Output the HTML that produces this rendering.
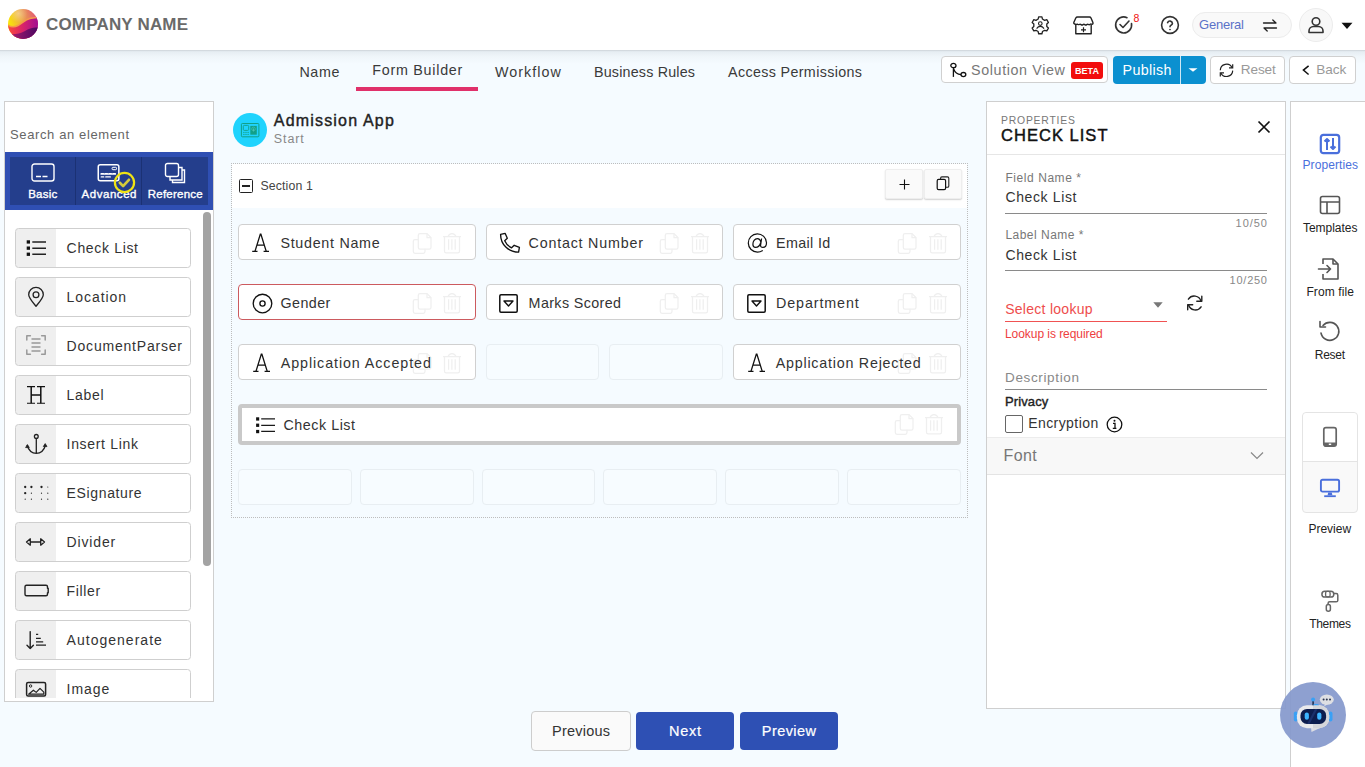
<!DOCTYPE html>
<html><head><meta charset="utf-8"><style>
html,body{margin:0;padding:0}
body{width:1365px;height:767px;overflow:hidden;position:relative;background:#f5fbff;font-family:"Liberation Sans",sans-serif}
.t{position:absolute;white-space:nowrap;line-height:1}
.r{position:absolute}
</style></head><body>
<div class="r" style="left:0px;top:50px;width:1365px;height:14px;background:linear-gradient(rgba(40,60,80,0.09),rgba(40,60,80,0.03) 45%,rgba(40,60,80,0))"></div>
<div class="r" style="left:0px;top:0px;width:1365px;height:50px;background:#fff;box-shadow:0 1px 1px rgba(0,0,0,0.07);z-index:2"></div>
<svg class="r" style="left:7.8px;top:9.3px;z-index:3" width="30" height="30" viewBox="0 0 30 30" fill="none"><defs>
<linearGradient id="lg1" x1="0" y1="0.3" x2="1" y2="0">
<stop offset="0" stop-color="#f9e30c"/><stop offset="0.45" stop-color="#eba24a"/><stop offset="1" stop-color="#e04683"/></linearGradient>
<linearGradient id="lg2" x1="0" y1="0" x2="1" y2="0">
<stop offset="0" stop-color="#fb4a3a"/><stop offset="0.5" stop-color="#d8236a"/><stop offset="1" stop-color="#a20e92"/></linearGradient>
<linearGradient id="lg3" x1="0" y1="0" x2="1" y2="0">
<stop offset="0" stop-color="#b01e6e"/><stop offset="1" stop-color="#4a0862"/></linearGradient>
<radialGradient id="hl" cx="0.35" cy="0.15" r="0.3"><stop offset="0" stop-color="#fff" stop-opacity="0.35"/><stop offset="1" stop-color="#fff" stop-opacity="0"/></radialGradient>
<clipPath id="cc"><circle cx="15" cy="15" r="15"/></clipPath></defs>
<g clip-path="url(#cc)">
<rect width="30" height="30" fill="url(#lg1)"/>
<rect width="30" height="30" fill="url(#hl)"/>
<path d="M0 16 C3 18 6 18.5 10 16.5 C14 14.5 17 10.5 22 9.5 C26 8.7 28 8.5 30 8.5 L30 30 L0 30Z" fill="url(#lg2)"/>
<path d="M0 16 C3 18 6 18.5 10 16.5 C14 14.5 17 10.5 22 9.5 C26 8.7 28 8.5 30 8.5" stroke="#f59a4a" stroke-width="1.5"/>
<path d="M0 25 C6 25.5 12 25 17 22 C21 19.5 25 18 30 18.5 L30 30 L0 30Z" fill="url(#lg3)"/>
</g></svg>
<div class="t" style="left:46.00px;top:16px;font-size:17px;font-weight:700;color:#6a6a6a;letter-spacing:0.173px;z-index:3">COMPANY NAME</div>
<svg class="r" style="left:1031px;top:15.5px;z-index:3" width="19" height="19" viewBox="0 0 19 19" fill="none"><path stroke="#222" stroke-width="1.3" stroke-linejoin="round" d="M7.15 3.06 L7.66 0.86 L10.94 0.86 L11.45 3.06 L13.63 4.32 L15.79 3.66 L17.43 6.50 L15.78 8.04 L15.78 10.56 L17.43 12.10 L15.79 14.94 L13.63 14.28 L11.45 15.54 L10.94 17.74 L7.66 17.74 L7.15 15.54 L4.97 14.28 L2.81 14.94 L1.17 12.10 L2.82 10.56 L2.82 8.04 L1.17 6.50 L2.81 3.66 L4.97 4.32Z"/>
<circle cx="9.3" cy="7.6" r="1.8" stroke="#222" stroke-width="1.1"/><path stroke="#222" stroke-width="1.1" d="M5.6 12.6c1-1.5 2.2-2.2 3.7-2.2s2.7.7 3.7 2.2"/></svg>
<svg class="r" style="left:1072.5px;top:15.5px;z-index:3" width="21" height="19" viewBox="0 0 21 19" fill="none"><path stroke="#222" stroke-width="1.4" stroke-linejoin="round" d="M4.5 1h12c.8 0 1.2.4 1.5 1l1.8 4.3c.3.8.2 1.6-.4 1.9-.7.4-1.4-.3-1.9-.1-.5.2-1.2 1-2 .4-.6-.4-1.2-.3-1.8.1-.6.5-1.3.5-1.9 0-.6-.4-1.2-.4-1.8 0-.6.5-1.3.5-1.9 0-.6-.4-1.2-.5-1.8-.1-.7.5-1.4-.1-2-.3-.7-.1-1.4.5-1.9.1C.7 7.9.6 7.1.9 6.3L2.8 2c.3-.6.8-1 1.7-1z"/>
<path stroke="#222" stroke-width="1.4" stroke-linejoin="round" d="M2.8 8.8V17.8h15.4V8.8"/><path stroke="#222" stroke-width="1.2" d="M10.5 11.3v5M8 13.8h5"/></svg>
<svg class="r" style="left:1114px;top:15px;z-index:3" width="20" height="20" viewBox="0 0 20 20" fill="none"><path stroke="#333" stroke-width="1.6" stroke-linecap="round" stroke-linejoin="round" d="M17.5 8.5A8 8 0 1 1 13 2.7"/><path stroke="#333" stroke-width="1.6" stroke-linecap="round" stroke-linejoin="round" d="M6 9.5l3 3 6-6.5"/></svg>
<div class="t" style="left:1133.50px;top:13px;font-size:10.5px;font-weight:400;color:#f01010;letter-spacing:0.000px;z-index:3">8</div>
<svg class="r" style="left:1160px;top:15px;z-index:3" width="20" height="20" viewBox="0 0 20 20" fill="none"><circle cx="10" cy="10" r="8.4" stroke="#333" stroke-width="1.6" stroke-linecap="round" stroke-linejoin="round"/><path stroke="#333" stroke-width="1.6" stroke-linecap="round" stroke-linejoin="round" d="M7.6 7.6a2.5 2.5 0 0 1 4.8.8c0 1.6-2.4 2-2.4 3.4"/><circle cx="10" cy="14.6" r="0.5" fill="#333" stroke="#333" stroke-width="0.8"/></svg>
<div class="r" style="left:1192px;top:12px;width:100px;height:26px;background:#f9f9f9;border:1px solid #ececec;box-sizing:border-box;border-radius:13px;z-index:3"></div>
<div class="t" style="left:1199.00px;top:18px;font-size:13px;font-weight:400;color:#5b72c8;letter-spacing:-0.208px;z-index:3">General</div>
<svg class="r" style="left:1261px;top:17px;z-index:3" width="18" height="16" viewBox="0 0 18 16" fill="none"><path d="M2.5 6h12.5l-3.2-3M15.5 11H3l3.2 3" stroke="#222" stroke-width="1.3" stroke-linecap="round" stroke-linejoin="round"/></svg>
<div class="r" style="left:1299px;top:8px;width:34px;height:34px;background:#f8f8f8;border:1px solid #ececec;box-sizing:border-box;border-radius:50%;z-index:3"></div>
<svg class="r" style="left:1306px;top:15px;z-index:3" width="20" height="20" viewBox="0 0 20 20" fill="none"><circle cx="10" cy="6.5" r="3.8" stroke="#333" stroke-width="1.6" stroke-linecap="round" stroke-linejoin="round"/><path stroke="#333" stroke-width="1.6" stroke-linecap="round" stroke-linejoin="round" d="M3 17.5v-1.5c0-2.5 2-4.5 4.5-4.5h5c2.5 0 4.5 2 4.5 4.5v1.5z"/></svg>
<svg class="r" style="left:1341px;top:22px;z-index:3" width="12" height="8" viewBox="0 0 12 8" fill="none"><path d="M0.5 0.8h11L6 7z" fill="#111"/></svg>
<div class="t" style="left:299.40px;top:65px;font-size:14.3px;font-weight:400;color:#3a3a3a;letter-spacing:0.617px;">Name</div>
<div class="t" style="left:372.30px;top:63px;font-size:14.3px;font-weight:400;color:#3a3a3a;letter-spacing:0.741px;">Form Builder</div>
<div class="t" style="left:495.00px;top:65px;font-size:14.3px;font-weight:400;color:#3a3a3a;letter-spacing:1.057px;">Workflow</div>
<div class="t" style="left:594.00px;top:65px;font-size:14.3px;font-weight:400;color:#3a3a3a;letter-spacing:0.188px;">Business Rules</div>
<div class="t" style="left:728.00px;top:65px;font-size:14.3px;font-weight:400;color:#3a3a3a;letter-spacing:0.356px;">Access Permissions</div>
<div class="r" style="left:356px;top:87px;width:122px;height:4px;background:#e0306a"></div>
<div class="r" style="left:941px;top:56px;width:167px;height:27px;background:#fff;border:1px solid #d0d0d0;box-sizing:border-box;border-radius:4px"></div>
<svg class="r" style="left:949px;top:62px;" width="19" height="17" viewBox="0 0 19 17" fill="none"><ellipse cx="4.4" cy="3.5" rx="2.6" ry="2.2" stroke="#111" stroke-width="1.3"/><ellipse cx="14.4" cy="12.6" rx="2.4" ry="2.1" stroke="#111" stroke-width="1.3"/><path d="M4.4 5.7v9.2" stroke="#111" stroke-width="1.3"/><path d="M4.6 6.8C5.8 10.3 7.8 12.4 12 12.6" stroke="#111" stroke-width="1.2"/></svg>
<div class="t" style="left:971.00px;top:63px;font-size:14.3px;font-weight:400;color:#777;letter-spacing:0.629px;">Solution View</div>
<div class="r" style="left:1071px;top:62px;width:32px;height:17px;background:#f20d0d;border-radius:3px"></div>
<div class="t" style="left:1075.00px;top:67px;font-size:9px;font-weight:700;color:#fff;letter-spacing:0.050px;">BETA</div>
<div class="r" style="left:1113px;top:56px;width:93px;height:28px;background:#0b90d0;border-radius:4px"></div>
<div class="r" style="left:1180px;top:56px;width:1px;height:28px;background:#cfe8f5"></div>
<div class="t" style="left:1122.50px;top:63px;font-size:14.3px;font-weight:400;color:#fff;letter-spacing:0.350px;">Publish</div>
<svg class="r" style="left:1188px;top:68px;" width="10" height="4" viewBox="0 0 10 4" fill="none"><path d="M0.5 0.3h9L5 3.8z" fill="#fff"/></svg>
<div class="r" style="left:1210px;top:56px;width:75px;height:28px;background:#fff;border:1px solid #d0d0d0;box-sizing:border-box;border-radius:4px"></div>
<svg class="r" style="left:1218px;top:62px;" width="17" height="17" viewBox="0 0 17 17" fill="none"><path d="M2.3 8.3A6.2 6.2 0 0 1 14.1 5.7M14.7 8.6A6.2 6.2 0 0 1 2.9 10.9" stroke="#222" stroke-width="1.2"/><path d="M14.7 2.2v3.7h-3.7M2.3 14.6v-3.7h3.7" stroke="#222" stroke-width="1.2"/></svg>
<div class="t" style="left:1240.80px;top:63px;font-size:13.6px;font-weight:400;color:#999;letter-spacing:-0.137px;">Reset</div>
<div class="r" style="left:1289px;top:56px;width:67px;height:28px;background:#fff;border:1px solid #d0d0d0;box-sizing:border-box;border-radius:4px"></div>
<svg class="r" style="left:1300px;top:63px;" width="12" height="14" viewBox="0 0 12 14" fill="none"><path d="M8.6 2.8L3.4 7.1l5.2 4.4" stroke="#111" stroke-width="1.5"/></svg>
<div class="t" style="left:1316.20px;top:63px;font-size:13.6px;font-weight:400;color:#999;letter-spacing:-0.067px;">Back</div>
<div class="r" style="left:4px;top:101px;width:210px;height:601px;background:#fff;border:1px solid #cfcfcf;box-sizing:border-box"></div>
<div class="t" style="left:10.00px;top:128px;font-size:13px;font-weight:400;color:#666;letter-spacing:0.619px;">Search an element</div>
<div class="r" style="left:5px;top:152px;width:208px;height:57.5px;background:#2f4fb3"></div>
<div class="r" style="left:10px;top:157px;width:198px;height:47.5px;background:#243e8c"></div>
<div class="r" style="left:75px;top:157px;width:1px;height:47.5px;background:#1b3174"></div>
<div class="r" style="left:141px;top:157px;width:1px;height:47.5px;background:#1b3174"></div>
<svg class="r" style="left:31px;top:163px;" width="24" height="19" viewBox="0 0 24 19" fill="none"><rect x="1" y="1" width="22" height="17" rx="2.5" stroke="#fff" stroke-width="1.4"/><path d="M5 13.5h5M11.5 13.5h5" stroke="#fff" stroke-width="1.4"/></svg>
<div class="t" style="left:28.20px;top:189px;font-size:11.5px;font-weight:400;color:#fff;letter-spacing:0.225px;-webkit-text-stroke:0.35px #fff;">Basic</div>
<svg class="r" style="left:97px;top:163px;" width="24" height="20" viewBox="0 0 24 20" fill="none"><rect x="1.25" y="1.85" width="20.6" height="15.9" rx="2" stroke="#fff" stroke-width="1.5"/><path d="M4.3 10.9h2.2M8.2 10.9h2.2M12.1 10.9h2.2M16 10.9h2.2" stroke="#fff" stroke-width="1.9" stroke-linecap="round"/><path d="M4.3 13.9h2.4M8.8 13.9h4.5" stroke="#fff" stroke-width="1.4" stroke-linecap="round"/><rect x="15.1" y="4.3" width="4.4" height="2.4" rx="0.8" stroke="#fff" stroke-width="1"/></svg>
<div class="t" style="left:81.50px;top:189px;font-size:11.5px;font-weight:400;color:#fff;letter-spacing:0.550px;-webkit-text-stroke:0.35px #fff;">Advanced</div>
<svg class="r" style="left:113px;top:171px;" width="23" height="23" viewBox="0 0 23 23" fill="none"><circle cx="11.5" cy="11.5" r="9.6" stroke="#efe314" stroke-width="2.2"/><path d="M6.8 11.8l3.3 3.3 5.8-6.3" stroke="#d4cb3c" stroke-width="2.7" stroke-linecap="round" stroke-linejoin="round"/></svg>
<svg class="r" style="left:164px;top:162px;" width="23" height="22" viewBox="0 0 23 22" fill="none"><rect x="1.5" y="1.5" width="13" height="13" rx="2" stroke="#fff" stroke-width="1.4"/><path d="M15 5.5h3v12.5H6v-3M18 8h2.5v12.5H8.5v-2.5" stroke="#fff" stroke-width="1.4"/></svg>
<div class="t" style="left:147.70px;top:189px;font-size:11.5px;font-weight:400;color:#fff;letter-spacing:0.244px;-webkit-text-stroke:0.35px #fff;">Reference</div>
<div class="r" style="left:203px;top:212px;width:8px;height:354px;background:#a3a3a3;border-radius:4px"></div>
<div class="r" style="left:15px;top:228px;width:176px;height:40px;border:1px solid #cfcfcf;box-sizing:border-box;border-radius:3.5px;background:linear-gradient(90deg,#efefef 0,#efefef 40px,#fff 40px);z-index:1"></div>
<svg class="r" style="left:15px;top:228px;z-index:1" width="41" height="40" viewBox="0 0 41 40" fill="none"><rect x="11.7" y="12.3" width="3.3" height="3.3" fill="#111"/><rect x="11.7" y="18.5" width="3.3" height="3.3" fill="#111"/><rect x="11.7" y="24.6" width="3.3" height="3.3" fill="#111"/><path d="M17.3 14h13.7M17.3 20.2h13.7M17.3 26.3h13.7" stroke="#222" stroke-width="1.4"/></svg>
<div class="t" style="left:66.60px;top:241px;font-size:14px;font-weight:400;color:#333;letter-spacing:0.672px;z-index:1">Check List</div>
<div class="r" style="left:15px;top:277px;width:176px;height:40px;border:1px solid #cfcfcf;box-sizing:border-box;border-radius:3.5px;background:linear-gradient(90deg,#efefef 0,#efefef 40px,#fff 40px);z-index:1"></div>
<svg class="r" style="left:15px;top:277px;z-index:1" width="41" height="40" viewBox="0 0 41 40" fill="none"><path d="M21 29.3c-3.5-4.3-7.3-8.6-7.3-11.6a7.3 7.3 0 0 1 14.6 0c0 3-3.8 7.3-7.3 11.6z" stroke="#222" stroke-width="1.3" stroke-linecap="round" stroke-linejoin="round"/><circle cx="21" cy="17.8" r="2.9" stroke="#222" stroke-width="1.3" stroke-linecap="round" stroke-linejoin="round"/></svg>
<div class="t" style="left:66.60px;top:290px;font-size:14px;font-weight:400;color:#333;letter-spacing:0.921px;z-index:1">Location</div>
<div class="r" style="left:15px;top:326px;width:176px;height:40px;border:1px solid #cfcfcf;box-sizing:border-box;border-radius:3.5px;background:linear-gradient(90deg,#efefef 0,#efefef 40px,#fff 40px);z-index:1"></div>
<svg class="r" style="left:15px;top:326px;z-index:1" width="41" height="40" viewBox="0 0 41 40" fill="none"><path d="M11.8 14V9.8h3.6M26.6 9.8h3.6V14M11.8 24v4.2h3.6M30.2 24v4.2h-3.6" stroke="#999" stroke-width="1.5" stroke-linecap="round" stroke-linejoin="round"/><path d="M16.5 13h9M16.5 17h9M16.5 21h9M16.5 25h9" stroke="#999" stroke-width="1.6"/></svg>
<div class="t" style="left:66.60px;top:339px;font-size:14px;font-weight:400;color:#333;letter-spacing:0.796px;z-index:1">DocumentParser</div>
<div class="r" style="left:15px;top:375px;width:176px;height:40px;border:1px solid #cfcfcf;box-sizing:border-box;border-radius:3.5px;background:linear-gradient(90deg,#efefef 0,#efefef 40px,#fff 40px);z-index:1"></div>
<svg class="r" style="left:15px;top:375px;z-index:1" width="41" height="40" viewBox="0 0 41 40" fill="none"><path d="M16.2 11.6v16.6M25.8 11.6v16.6M16.2 20h9.6" stroke="#111" stroke-width="1.5"/><path d="M12 11.6h8M22 11.6h8M12 28.2h8M22 28.2h8" stroke="#111" stroke-width="1.1"/></svg>
<div class="t" style="left:66.60px;top:388px;font-size:14px;font-weight:400;color:#333;letter-spacing:0.662px;z-index:1">Label</div>
<div class="r" style="left:15px;top:424px;width:176px;height:40px;border:1px solid #cfcfcf;box-sizing:border-box;border-radius:3.5px;background:linear-gradient(90deg,#efefef 0,#efefef 40px,#fff 40px);z-index:1"></div>
<svg class="r" style="left:15px;top:424px;z-index:1" width="41" height="40" viewBox="0 0 41 40" fill="none"><circle cx="21.3" cy="12.4" r="1.9" stroke="#222" stroke-width="1.3" stroke-linecap="round" stroke-linejoin="round"/><path d="M21.3 14.3v15M12.2 21.5c1.5 5 5 7.8 9.1 7.8s7.6-2.8 9.1-7.8" stroke="#222" stroke-width="1.3" stroke-linecap="round" stroke-linejoin="round"/><path d="M10.6 23.6l1.8-3 1.9 2.9zM28.3 22.5l1.9-2.9 1.8 3z" fill="#222" stroke="#222" stroke-width="0.8" stroke-linejoin="round"/></svg>
<div class="t" style="left:66.60px;top:437px;font-size:14px;font-weight:400;color:#333;letter-spacing:0.675px;z-index:1">Insert Link</div>
<div class="r" style="left:15px;top:473px;width:176px;height:40px;border:1px solid #cfcfcf;box-sizing:border-box;border-radius:3.5px;background:linear-gradient(90deg,#efefef 0,#efefef 40px,#fff 40px);z-index:1"></div>
<svg class="r" style="left:15px;top:473px;z-index:1" width="41" height="40" viewBox="0 0 41 40" fill="none"><g fill="#222"><circle cx="10.2" cy="14" r="1.15"/><circle cx="16.4" cy="14" r="1.15"/><circle cx="26.5" cy="14" r="1.15"/><circle cx="32.8" cy="14" r="0.55"/><circle cx="10.2" cy="20.2" r="1.15"/><circle cx="16.4" cy="20.2" r="0.6"/><circle cx="26.5" cy="20.2" r="0.6"/><circle cx="32.8" cy="20.2" r="0.6"/><circle cx="10.2" cy="26.2" r="0.6"/><circle cx="16.4" cy="26.2" r="0.6"/><circle cx="26.5" cy="26.2" r="0.6"/><circle cx="32.8" cy="26.2" r="0.6"/></g></svg>
<div class="t" style="left:66.60px;top:486px;font-size:14px;font-weight:400;color:#333;letter-spacing:0.639px;z-index:1">ESignature</div>
<div class="r" style="left:15px;top:522px;width:176px;height:40px;border:1px solid #cfcfcf;box-sizing:border-box;border-radius:3.5px;background:linear-gradient(90deg,#efefef 0,#efefef 40px,#fff 40px);z-index:1"></div>
<svg class="r" style="left:15px;top:522px;z-index:1" width="41" height="40" viewBox="0 0 41 40" fill="none"><path d="M15 20h11" stroke="#222" stroke-width="1.5"/><path d="M11.5 20l3.8-3.2v6.4zM29.5 20l-3.8-3.2v6.4z" stroke="#222" stroke-width="1.3" stroke-linejoin="round"/></svg>
<div class="t" style="left:66.60px;top:535px;font-size:14px;font-weight:400;color:#333;letter-spacing:0.842px;z-index:1">Divider</div>
<div class="r" style="left:15px;top:571px;width:176px;height:40px;border:1px solid #cfcfcf;box-sizing:border-box;border-radius:3.5px;background:linear-gradient(90deg,#efefef 0,#efefef 40px,#fff 40px);z-index:1"></div>
<svg class="r" style="left:15px;top:571px;z-index:1" width="41" height="40" viewBox="0 0 41 40" fill="none"><path d="M11.5 14.3h19.5c1 0 1.5.5 1.5 1.5v1.5h.7v4.5h-.7v1.5c0 1-.5 1.5-1.5 1.5H11.5c-1 0-1.5-.5-1.5-1.5v-7.5c0-1 .5-1.5 1.5-1.5z" stroke="#222" stroke-width="1.4" stroke-linejoin="round"/></svg>
<div class="t" style="left:66.60px;top:584px;font-size:14px;font-weight:400;color:#333;letter-spacing:0.630px;z-index:1">Filler</div>
<div class="r" style="left:15px;top:620px;width:176px;height:40px;border:1px solid #cfcfcf;box-sizing:border-box;border-radius:3.5px;background:linear-gradient(90deg,#efefef 0,#efefef 40px,#fff 40px);z-index:1"></div>
<svg class="r" style="left:15px;top:620px;z-index:1" width="41" height="40" viewBox="0 0 41 40" fill="none"><path d="M15.2 11.6v17M12 25.3l3.2 3.3 3.2-3.3" stroke="#222" stroke-width="1.4" stroke-linecap="round" stroke-linejoin="round"/><path d="M21 14.4h2.2M21 18.3h4.8M21 21.8h7.2M21 25.2h10" stroke="#222" stroke-width="1.3"/></svg>
<div class="t" style="left:66.60px;top:633px;font-size:14px;font-weight:400;color:#333;letter-spacing:1.014px;z-index:1">Autogenerate</div>
<div class="r" style="left:15px;top:669px;width:176px;height:40px;border:1px solid #cfcfcf;box-sizing:border-box;border-radius:3.5px;background:linear-gradient(90deg,#efefef 0,#efefef 40px,#fff 40px);z-index:1"></div>
<svg class="r" style="left:15px;top:669px;z-index:1" width="41" height="40" viewBox="0 0 41 40" fill="none"><rect x="11.6" y="13.5" width="19" height="13.6" rx="1.5" stroke="#222" stroke-width="1.5"/><circle cx="15.6" cy="17" r="1.2" stroke="#222" stroke-width="1"/><path d="M13.6 25.2l4.8-4 2.8 2.2 3.8-4 3.8 3.8v2z" stroke="#222" stroke-width="1.2" stroke-linejoin="round"/></svg>
<div class="t" style="left:66.60px;top:682px;font-size:14px;font-weight:400;color:#333;letter-spacing:0.925px;z-index:1">Image</div>
<div class="r" style="left:5px;top:698px;width:208px;height:3px;background:#fff;z-index:2"></div>
<div class="r" style="left:4px;top:701px;width:210px;height:66px;background:#f5fbff;z-index:2;border-top:1px solid #cfcfcf;box-sizing:border-box"></div>
<div class="r" style="left:233px;top:113px;width:34px;height:34px;background:#1fd3fd;border-radius:50%"></div>
<svg class="r" style="left:240px;top:122px;" width="20" height="16" viewBox="0 0 20 16" fill="none"><rect x="1.4" y="1.5" width="17.5" height="13.3" rx="1" stroke="#12a088" stroke-width="1"/><rect x="3.3" y="3.4" width="5.4" height="5" rx="1" stroke="#12a088" stroke-width="0.9"/><circle cx="3.9" cy="10.4" r="0.65" fill="#12a088"/><circle cx="3.9" cy="12.4" r="0.65" fill="#12a088"/><circle cx="6" cy="10.4" r="0.65" fill="#12a088"/><circle cx="6" cy="12.4" r="0.65" fill="#12a088"/><circle cx="8.1" cy="10.4" r="0.65" fill="#12a088"/><circle cx="8.1" cy="12.4" r="0.65" fill="#12a088"/><rect x="10.3" y="3.9" width="6.5" height="8.8" fill="#12a088"/><circle cx="13.5" cy="6.9" r="1.8" stroke="#4fc9b8" stroke-width="0.6"/><rect x="13.1" y="6.4" width="0.8" height="3" fill="#4fc9b8"/></svg>
<div class="t" style="left:273.80px;top:113px;font-size:16px;font-weight:400;color:#222;letter-spacing:1.179px;-webkit-text-stroke:0.4px #222;">Admission App</div>
<div class="t" style="left:273.80px;top:133px;font-size:12.5px;font-weight:400;color:#888;letter-spacing:0.900px;">Start</div>
<div class="r" style="left:231px;top:163px;width:737px;height:355px;border:1px dotted #bdbdbd;box-sizing:border-box"></div>
<div class="r" style="left:232px;top:164px;width:735px;height:44px;background:#fff"></div>
<div class="r" style="left:239px;top:179px;width:14px;height:14px;border:1.3px solid #222;box-sizing:border-box;border-radius:1.5px"></div>
<div class="r" style="left:242px;top:185.3px;width:8px;height:1.3999999999999773px;background:#222"></div>
<div class="t" style="left:260.40px;top:180px;font-size:12.3px;font-weight:400;color:#444;letter-spacing:0.138px;">Section 1</div>
<div class="r" style="left:885px;top:169px;width:38px;height:30px;background:#fafafa;border:1px solid #eeeeee;box-sizing:border-box;border-radius:2px;box-shadow:0 1px 1.5px rgba(0,0,0,0.18)"></div>
<svg class="r" style="left:897px;top:177px;" width="14" height="14" viewBox="0 0 14 14" fill="none"><path d="M7.5 2.5v10M2.5 7.5h10" stroke="#111" stroke-width="1.1"/></svg>
<div class="r" style="left:924px;top:169px;width:38px;height:30px;background:#fafafa;border:1px solid #eeeeee;box-sizing:border-box;border-radius:2px;box-shadow:0 1px 1.5px rgba(0,0,0,0.18)"></div>
<svg class="r" style="left:936px;top:176px;" width="14" height="15" viewBox="0 0 14 15" fill="none"><path d="M4.6 3.2V2.2c0-.8.5-1.3 1.3-1.3h5.6c.8 0 1.3.5 1.3 1.3v7.8c0 .8-.5 1.3-1.3 1.3h-1.5" stroke="#222" stroke-width="1.1"/><rect x="1.2" y="3.4" width="8.4" height="10.3" rx="1.4" stroke="#111" stroke-width="1.2"/></svg>
<div class="r" style="left:238px;top:224px;width:238px;height:36px;background:#fff;border:1px solid #d0d0d0;box-sizing:border-box;border-radius:4px"></div>
<svg class="r" style="left:251px;top:233.2px;" width="19" height="20" viewBox="0 0 19 20" fill="none"><path d="M4 18.2L9.3 1.2h.6L15.2 18.2M6 12h7.3" stroke="#111" stroke-width="1.25"/><path d="M1.2 18.3h5.3M12.6 18.3h5.4" stroke="#111" stroke-width="1.3"/></svg>
<div class="t" style="left:280.40px;top:236px;font-size:14.3px;font-weight:400;color:#333;letter-spacing:0.718px;">Student Name</div>
<svg class="r" style="left:412px;top:232px;" width="20" height="22" viewBox="0 0 20 22" fill="none"><path d="M6.3 7.5H3c-1 0-1.7.7-1.7 1.7v10.4c0 1 .7 1.7 1.7 1.7h8.3c1 0 1.7-.7 1.7-1.7v-2.9" stroke="#efefef" stroke-width="1.25"/><path d="M8 1.5h7l4 4v10c0 1-.7 1.7-1.7 1.7H8c-1 0-1.7-.7-1.7-1.7V3.2c0-1 .7-1.7 1.7-1.7z" stroke="#efefef" stroke-width="1.25"/><path d="M15 1.5v4h4" stroke="#efefef" stroke-width="1.25"/></svg><svg class="r" style="left:442px;top:232px;" width="20" height="22" viewBox="0 0 20 22" fill="none"><path d="M1 4.6h18M6 4.6c.6-2 2-3.1 4-3.1s3.4 1.1 4 3.1M2.5 4.6v14.6c0 1 .7 1.6 1.6 1.6h11.8c1 0 1.6-.6 1.6-1.6V4.6M6.6 7.3v10.4M9.9 7.3v10.4M13.2 7.3v10.4" stroke="#efefef" stroke-width="1.25"/></svg>
<div class="r" style="left:486px;top:224px;width:237px;height:36px;background:#fff;border:1px solid #d0d0d0;box-sizing:border-box;border-radius:4px"></div>
<svg class="r" style="left:495px;top:228px;" width="30" height="30" viewBox="0 0 30 30" fill="none"><path d="M5.6 6.4L10.2 5.4L12.3 10.3L9.7 12.8C10.9 15.6 13.5 18.3 16.6 19.8L19.2 17.3L24.4 19.4L23.6 24.1C13.5 24.1 5.6 16.5 5.6 6.4Z" stroke="#111" stroke-width="1.35" stroke-linejoin="round"/></svg>
<div class="t" style="left:528.60px;top:236px;font-size:14.3px;font-weight:400;color:#333;letter-spacing:0.785px;">Contact Number</div>
<svg class="r" style="left:659px;top:232px;" width="20" height="22" viewBox="0 0 20 22" fill="none"><path d="M6.3 7.5H3c-1 0-1.7.7-1.7 1.7v10.4c0 1 .7 1.7 1.7 1.7h8.3c1 0 1.7-.7 1.7-1.7v-2.9" stroke="#efefef" stroke-width="1.25"/><path d="M8 1.5h7l4 4v10c0 1-.7 1.7-1.7 1.7H8c-1 0-1.7-.7-1.7-1.7V3.2c0-1 .7-1.7 1.7-1.7z" stroke="#efefef" stroke-width="1.25"/><path d="M15 1.5v4h4" stroke="#efefef" stroke-width="1.25"/></svg><svg class="r" style="left:689.5px;top:232px;" width="20" height="22" viewBox="0 0 20 22" fill="none"><path d="M1 4.6h18M6 4.6c.6-2 2-3.1 4-3.1s3.4 1.1 4 3.1M2.5 4.6v14.6c0 1 .7 1.6 1.6 1.6h11.8c1 0 1.6-.6 1.6-1.6V4.6M6.6 7.3v10.4M9.9 7.3v10.4M13.2 7.3v10.4" stroke="#efefef" stroke-width="1.25"/></svg>
<div class="r" style="left:733px;top:224px;width:228px;height:36px;background:#fff;border:1px solid #d0d0d0;box-sizing:border-box;border-radius:4px"></div>
<svg class="r" style="left:742px;top:228.0px;" width="30" height="30" viewBox="0 0 30 30" fill="none"><path d="M20.8 22.5C19 23.6 17.3 24.1 15.5 24.1A9.1 9.1 0 1 1 24.5 14.8C24.5 17.8 22.8 19.4 20.9 19.4C19.3 19.4 18.4 18.6 18.6 17.2L19.6 10.5M18.8 14C18.3 11.6 17 10.6 15.4 10.6C12.6 10.6 10.9 13.5 10.9 16.2C10.9 18.3 12 19.4 13.5 19.4C16 19.4 18.1 17 18.7 14.5" stroke="#111" stroke-width="1.2"/></svg>
<div class="t" style="left:776.00px;top:236px;font-size:14.3px;font-weight:400;color:#333;letter-spacing:0.364px;">Email Id</div>
<svg class="r" style="left:897px;top:232px;" width="20" height="22" viewBox="0 0 20 22" fill="none"><path d="M6.3 7.5H3c-1 0-1.7.7-1.7 1.7v10.4c0 1 .7 1.7 1.7 1.7h8.3c1 0 1.7-.7 1.7-1.7v-2.9" stroke="#efefef" stroke-width="1.25"/><path d="M8 1.5h7l4 4v10c0 1-.7 1.7-1.7 1.7H8c-1 0-1.7-.7-1.7-1.7V3.2c0-1 .7-1.7 1.7-1.7z" stroke="#efefef" stroke-width="1.25"/><path d="M15 1.5v4h4" stroke="#efefef" stroke-width="1.25"/></svg><svg class="r" style="left:927.5px;top:232px;" width="20" height="22" viewBox="0 0 20 22" fill="none"><path d="M1 4.6h18M6 4.6c.6-2 2-3.1 4-3.1s3.4 1.1 4 3.1M2.5 4.6v14.6c0 1 .7 1.6 1.6 1.6h11.8c1 0 1.6-.6 1.6-1.6V4.6M6.6 7.3v10.4M9.9 7.3v10.4M13.2 7.3v10.4" stroke="#efefef" stroke-width="1.25"/></svg>
<div class="r" style="left:238px;top:284px;width:238px;height:36px;background:#fff;border:1px solid #cc5a5e;box-sizing:border-box;border-radius:4px"></div>
<svg class="r" style="left:252px;top:293px;" width="21" height="21" viewBox="0 0 21 21" fill="none"><circle cx="10.5" cy="10.5" r="9.3" stroke="#111" stroke-width="1.35"/><circle cx="10.5" cy="10.5" r="2.6" stroke="#111" stroke-width="1.35"/></svg>
<div class="t" style="left:280.40px;top:296px;font-size:14.3px;font-weight:400;color:#333;letter-spacing:0.460px;">Gender</div>
<svg class="r" style="left:412px;top:292px;" width="20" height="22" viewBox="0 0 20 22" fill="none"><path d="M6.3 7.5H3c-1 0-1.7.7-1.7 1.7v10.4c0 1 .7 1.7 1.7 1.7h8.3c1 0 1.7-.7 1.7-1.7v-2.9" stroke="#efefef" stroke-width="1.25"/><path d="M8 1.5h7l4 4v10c0 1-.7 1.7-1.7 1.7H8c-1 0-1.7-.7-1.7-1.7V3.2c0-1 .7-1.7 1.7-1.7z" stroke="#efefef" stroke-width="1.25"/><path d="M15 1.5v4h4" stroke="#efefef" stroke-width="1.25"/></svg><svg class="r" style="left:442px;top:292px;" width="20" height="22" viewBox="0 0 20 22" fill="none"><path d="M1 4.6h18M6 4.6c.6-2 2-3.1 4-3.1s3.4 1.1 4 3.1M2.5 4.6v14.6c0 1 .7 1.6 1.6 1.6h11.8c1 0 1.6-.6 1.6-1.6V4.6M6.6 7.3v10.4M9.9 7.3v10.4M13.2 7.3v10.4" stroke="#efefef" stroke-width="1.25"/></svg>
<div class="r" style="left:486px;top:284px;width:237px;height:36px;background:#fff;border:1px solid #d0d0d0;box-sizing:border-box;border-radius:4px"></div>
<svg class="r" style="left:499px;top:294px;" width="19" height="19" viewBox="0 0 19 19" fill="none"><rect x="0.8" y="0.8" width="17.4" height="17.4" rx="1.2" stroke="#111" stroke-width="1.5"/><path d="M5 7h9l-4.5 5z" stroke="#111" stroke-width="1.4" stroke-linejoin="round"/></svg>
<div class="t" style="left:528.60px;top:296px;font-size:14.3px;font-weight:400;color:#333;letter-spacing:0.382px;">Marks Scored</div>
<svg class="r" style="left:659px;top:292px;" width="20" height="22" viewBox="0 0 20 22" fill="none"><path d="M6.3 7.5H3c-1 0-1.7.7-1.7 1.7v10.4c0 1 .7 1.7 1.7 1.7h8.3c1 0 1.7-.7 1.7-1.7v-2.9" stroke="#efefef" stroke-width="1.25"/><path d="M8 1.5h7l4 4v10c0 1-.7 1.7-1.7 1.7H8c-1 0-1.7-.7-1.7-1.7V3.2c0-1 .7-1.7 1.7-1.7z" stroke="#efefef" stroke-width="1.25"/><path d="M15 1.5v4h4" stroke="#efefef" stroke-width="1.25"/></svg><svg class="r" style="left:689.5px;top:292px;" width="20" height="22" viewBox="0 0 20 22" fill="none"><path d="M1 4.6h18M6 4.6c.6-2 2-3.1 4-3.1s3.4 1.1 4 3.1M2.5 4.6v14.6c0 1 .7 1.6 1.6 1.6h11.8c1 0 1.6-.6 1.6-1.6V4.6M6.6 7.3v10.4M9.9 7.3v10.4M13.2 7.3v10.4" stroke="#efefef" stroke-width="1.25"/></svg>
<div class="r" style="left:733px;top:284px;width:228px;height:36px;background:#fff;border:1px solid #d0d0d0;box-sizing:border-box;border-radius:4px"></div>
<svg class="r" style="left:747px;top:294px;" width="19" height="19" viewBox="0 0 19 19" fill="none"><rect x="0.8" y="0.8" width="17.4" height="17.4" rx="1.2" stroke="#111" stroke-width="1.5"/><path d="M5 7h9l-4.5 5z" stroke="#111" stroke-width="1.4" stroke-linejoin="round"/></svg>
<div class="t" style="left:776.00px;top:296px;font-size:14.3px;font-weight:400;color:#333;letter-spacing:0.889px;">Department</div>
<svg class="r" style="left:897px;top:292px;" width="20" height="22" viewBox="0 0 20 22" fill="none"><path d="M6.3 7.5H3c-1 0-1.7.7-1.7 1.7v10.4c0 1 .7 1.7 1.7 1.7h8.3c1 0 1.7-.7 1.7-1.7v-2.9" stroke="#efefef" stroke-width="1.25"/><path d="M8 1.5h7l4 4v10c0 1-.7 1.7-1.7 1.7H8c-1 0-1.7-.7-1.7-1.7V3.2c0-1 .7-1.7 1.7-1.7z" stroke="#efefef" stroke-width="1.25"/><path d="M15 1.5v4h4" stroke="#efefef" stroke-width="1.25"/></svg><svg class="r" style="left:927.5px;top:292px;" width="20" height="22" viewBox="0 0 20 22" fill="none"><path d="M1 4.6h18M6 4.6c.6-2 2-3.1 4-3.1s3.4 1.1 4 3.1M2.5 4.6v14.6c0 1 .7 1.6 1.6 1.6h11.8c1 0 1.6-.6 1.6-1.6V4.6M6.6 7.3v10.4M9.9 7.3v10.4M13.2 7.3v10.4" stroke="#efefef" stroke-width="1.25"/></svg>
<div class="r" style="left:238px;top:344px;width:238px;height:36px;background:#fff;border:1px solid #d0d0d0;box-sizing:border-box;border-radius:4px"></div>
<svg class="r" style="left:251.6px;top:353.2px;" width="19" height="20" viewBox="0 0 19 20" fill="none"><path d="M4 18.2L9.3 1.2h.6L15.2 18.2M6 12h7.3" stroke="#111" stroke-width="1.25"/><path d="M1.2 18.3h5.3M12.6 18.3h5.4" stroke="#111" stroke-width="1.3"/></svg>
<svg class="r" style="left:412px;top:352px;" width="20" height="22" viewBox="0 0 20 22" fill="none"><path d="M6.3 7.5H3c-1 0-1.7.7-1.7 1.7v10.4c0 1 .7 1.7 1.7 1.7h8.3c1 0 1.7-.7 1.7-1.7v-2.9" stroke="#efefef" stroke-width="1.25"/><path d="M8 1.5h7l4 4v10c0 1-.7 1.7-1.7 1.7H8c-1 0-1.7-.7-1.7-1.7V3.2c0-1 .7-1.7 1.7-1.7z" stroke="#efefef" stroke-width="1.25"/><path d="M15 1.5v4h4" stroke="#efefef" stroke-width="1.25"/></svg><svg class="r" style="left:442px;top:352px;" width="20" height="22" viewBox="0 0 20 22" fill="none"><path d="M1 4.6h18M6 4.6c.6-2 2-3.1 4-3.1s3.4 1.1 4 3.1M2.5 4.6v14.6c0 1 .7 1.6 1.6 1.6h11.8c1 0 1.6-.6 1.6-1.6V4.6M6.6 7.3v10.4M9.9 7.3v10.4M13.2 7.3v10.4" stroke="#efefef" stroke-width="1.25"/></svg>
<div class="t" style="left:280.70px;top:356px;font-size:14.3px;font-weight:400;color:#333;letter-spacing:0.918px;">Application Accepted</div>
<div class="r" style="left:486px;top:344px;width:113px;height:36px;background:#f7fcff;border:1px solid #e8eef2;box-sizing:border-box;border-radius:4px"></div>
<div class="r" style="left:609px;top:344px;width:114px;height:36px;background:#f7fcff;border:1px solid #e8eef2;box-sizing:border-box;border-radius:4px"></div>
<div class="r" style="left:733px;top:344px;width:228px;height:36px;background:#fff;border:1px solid #d0d0d0;box-sizing:border-box;border-radius:4px"></div>
<svg class="r" style="left:747px;top:353.2px;" width="19" height="20" viewBox="0 0 19 20" fill="none"><path d="M4 18.2L9.3 1.2h.6L15.2 18.2M6 12h7.3" stroke="#111" stroke-width="1.25"/><path d="M1.2 18.3h5.3M12.6 18.3h5.4" stroke="#111" stroke-width="1.3"/></svg>
<svg class="r" style="left:897px;top:352px;" width="20" height="22" viewBox="0 0 20 22" fill="none"><path d="M6.3 7.5H3c-1 0-1.7.7-1.7 1.7v10.4c0 1 .7 1.7 1.7 1.7h8.3c1 0 1.7-.7 1.7-1.7v-2.9" stroke="#efefef" stroke-width="1.25"/><path d="M8 1.5h7l4 4v10c0 1-.7 1.7-1.7 1.7H8c-1 0-1.7-.7-1.7-1.7V3.2c0-1 .7-1.7 1.7-1.7z" stroke="#efefef" stroke-width="1.25"/><path d="M15 1.5v4h4" stroke="#efefef" stroke-width="1.25"/></svg><svg class="r" style="left:927.5px;top:352px;" width="20" height="22" viewBox="0 0 20 22" fill="none"><path d="M1 4.6h18M6 4.6c.6-2 2-3.1 4-3.1s3.4 1.1 4 3.1M2.5 4.6v14.6c0 1 .7 1.6 1.6 1.6h11.8c1 0 1.6-.6 1.6-1.6V4.6M6.6 7.3v10.4M9.9 7.3v10.4M13.2 7.3v10.4" stroke="#efefef" stroke-width="1.25"/></svg>
<div class="t" style="left:775.70px;top:356px;font-size:14.3px;font-weight:400;color:#333;letter-spacing:0.771px;">Application Rejected</div>
<div class="r" style="left:238px;top:404px;width:723px;height:41px;background:#fff;border:4px solid #c9c9c9;box-sizing:border-box;border-radius:4px"></div>
<svg class="r" style="left:255px;top:417px;" width="21" height="17" viewBox="0 0 21 17" fill="none"><rect x="1.1" y="0.3" width="3.1" height="3.3" fill="#111"/><rect x="1.1" y="6.6" width="3.1" height="3.3" fill="#111"/><rect x="1.1" y="12.9" width="3.1" height="3.3" fill="#111"/><path d="M6.2 1.9h13.8M6.2 8.3h13.8M6.2 14.4h13.8" stroke="#1a1a1a" stroke-width="1.3"/></svg>
<div class="t" style="left:283.50px;top:418px;font-size:14.3px;font-weight:400;color:#333;letter-spacing:0.528px;">Check List</div>
<svg class="r" style="left:894px;top:413px;" width="20" height="22" viewBox="0 0 20 22" fill="none"><path d="M6.3 7.5H3c-1 0-1.7.7-1.7 1.7v10.4c0 1 .7 1.7 1.7 1.7h8.3c1 0 1.7-.7 1.7-1.7v-2.9" stroke="#efefef" stroke-width="1.25"/><path d="M8 1.5h7l4 4v10c0 1-.7 1.7-1.7 1.7H8c-1 0-1.7-.7-1.7-1.7V3.2c0-1 .7-1.7 1.7-1.7z" stroke="#efefef" stroke-width="1.25"/><path d="M15 1.5v4h4" stroke="#efefef" stroke-width="1.25"/></svg><svg class="r" style="left:924px;top:413px;" width="20" height="22" viewBox="0 0 20 22" fill="none"><path d="M1 4.6h18M6 4.6c.6-2 2-3.1 4-3.1s3.4 1.1 4 3.1M2.5 4.6v14.6c0 1 .7 1.6 1.6 1.6h11.8c1 0 1.6-.6 1.6-1.6V4.6M6.6 7.3v10.4M9.9 7.3v10.4M13.2 7.3v10.4" stroke="#efefef" stroke-width="1.25"/></svg>
<div class="r" style="left:238px;top:469px;width:114px;height:36px;background:#f7fcff;border:1px solid #e8eef2;box-sizing:border-box;border-radius:4px"></div>
<div class="r" style="left:360px;top:469px;width:114px;height:36px;background:#f7fcff;border:1px solid #e8eef2;box-sizing:border-box;border-radius:4px"></div>
<div class="r" style="left:482px;top:469px;width:113px;height:36px;background:#f7fcff;border:1px solid #e8eef2;box-sizing:border-box;border-radius:4px"></div>
<div class="r" style="left:603px;top:469px;width:114px;height:36px;background:#f7fcff;border:1px solid #e8eef2;box-sizing:border-box;border-radius:4px"></div>
<div class="r" style="left:725px;top:469px;width:114px;height:36px;background:#f7fcff;border:1px solid #e8eef2;box-sizing:border-box;border-radius:4px"></div>
<div class="r" style="left:847px;top:469px;width:114px;height:36px;background:#f7fcff;border:1px solid #e8eef2;box-sizing:border-box;border-radius:4px"></div>
<div class="r" style="left:986px;top:101px;width:300px;height:608px;background:#fff;border:1px solid #cfcfcf;box-sizing:border-box"></div>
<div class="r" style="left:987px;top:154px;width:298px;height:1px;background:#e6e6e6"></div>
<div class="t" style="left:1001.00px;top:116px;font-size:10.4px;font-weight:400;color:#777;letter-spacing:0.794px;">PROPERTIES</div>
<div class="t" style="left:1001.00px;top:127px;font-size:16.5px;font-weight:400;color:#111;letter-spacing:1.033px;-webkit-text-stroke:0.45px #111;">CHECK LIST</div>
<svg class="r" style="left:1257px;top:120px;" width="14" height="14" viewBox="0 0 14 14" fill="none"><path d="M1.5 1.5l11 11M12.5 1.5l-11 11" stroke="#111" stroke-width="1.7"/></svg>
<div class="t" style="left:1005.40px;top:172px;font-size:12px;font-weight:400;color:#777;letter-spacing:0.568px;">Field Name *</div>
<div class="t" style="left:1005.40px;top:190px;font-size:14px;font-weight:400;color:#333;letter-spacing:0.628px;">Check List</div>
<div class="r" style="left:1005px;top:213px;width:262px;height:1px;background:#8a8a8a"></div>
<div class="t" style="left:1235.60px;top:218px;font-size:11px;font-weight:400;color:#888;letter-spacing:0.962px;">10/50</div>
<div class="t" style="left:1005.40px;top:229px;font-size:12px;font-weight:400;color:#777;letter-spacing:0.482px;">Label Name *</div>
<div class="t" style="left:1005.40px;top:248px;font-size:14px;font-weight:400;color:#333;letter-spacing:0.628px;">Check List</div>
<div class="r" style="left:1005px;top:270px;width:262px;height:1px;background:#8a8a8a"></div>
<div class="t" style="left:1229.60px;top:275px;font-size:11px;font-weight:400;color:#888;letter-spacing:0.750px;">10/250</div>
<div class="t" style="left:1005.20px;top:302px;font-size:14px;font-weight:400;color:#ee4d4d;letter-spacing:0.271px;">Select lookup</div>
<svg class="r" style="left:1153px;top:302px;" width="10" height="6" viewBox="0 0 10 6" fill="none"><path d="M0.3 0.3h9.4L5 5.7z" fill="#777"/></svg>
<div class="r" style="left:1005px;top:320.6px;width:162px;height:1.599999999999966px;background:#f05252"></div>
<svg class="r" style="left:1185px;top:294px;" width="20" height="18" viewBox="0 0 20 18" fill="none"><path d="M16 7.2A7 7 0 0 0 3.4 5.2M3.5 10.8a7 7 0 0 0 12.6 2" stroke="#222" stroke-width="1.4" stroke-linecap="round"/><path d="M16.8 2.2v5h-5M2.7 15.8v-5h5" stroke="#222" stroke-width="1.4" stroke-linecap="round" stroke-linejoin="round"/></svg>
<div class="t" style="left:1005.00px;top:328px;font-size:12px;font-weight:400;color:#ee4040;letter-spacing:-0.056px;">Lookup is required</div>
<div class="t" style="left:1005.00px;top:371px;font-size:13.5px;font-weight:400;color:#888;letter-spacing:0.645px;">Description</div>
<div class="r" style="left:1005px;top:389px;width:262px;height:1px;background:#8a8a8a"></div>
<div class="t" style="left:1005.00px;top:395px;font-size:13px;font-weight:400;color:#222;letter-spacing:0.117px;-webkit-text-stroke:0.4px #222;">Privacy</div>
<div class="r" style="left:1005px;top:415px;width:18px;height:18px;border:1.8px solid #666;box-sizing:border-box;border-radius:2px"></div>
<div class="t" style="left:1028.20px;top:416px;font-size:14px;font-weight:400;color:#333;letter-spacing:0.428px;">Encryption</div>
<svg class="r" style="left:1106px;top:416px;" width="17" height="17" viewBox="0 0 17 17" fill="none"><circle cx="8.5" cy="8.5" r="7.3" stroke="#111" stroke-width="1.3"/><circle cx="8.5" cy="4.8" r="1" fill="#111"/><path d="M7 7.3h2v5M6.8 12.4h3.6" stroke="#111" stroke-width="1.3"/></svg>
<div class="r" style="left:987px;top:437px;width:298px;height:38px;background:#f8f8f8;border-top:1px solid #ececec;border-bottom:1px solid #e4e4e4;box-sizing:border-box"></div>
<div class="t" style="left:1003.50px;top:448px;font-size:16px;font-weight:400;color:#777;letter-spacing:0.433px;">Font</div>
<svg class="r" style="left:1250px;top:451px;" width="14" height="9" viewBox="0 0 14 9" fill="none"><path d="M1 1.5l6 6 6-6" stroke="#888" stroke-width="1.2"/></svg>
<div class="r" style="left:1290px;top:101px;width:75px;height:666px;background:#fff;border-left:1px solid #cfcfcf;border-top:1px solid #cfcfcf;box-sizing:border-box"></div>
<svg class="r" style="left:1319px;top:133px;" width="22" height="22" viewBox="0 0 22 22" fill="none"><rect x="1.8" y="1.8" width="18.4" height="18.4" rx="2.6" stroke="#4a6fdc" stroke-width="2.2"/><path d="M8 17V6M5.5 8.5L8 6l2.5 2.5M14 5v11M11.5 13.5L14 16l2.5-2.5" stroke="#4a6fdc" stroke-width="2" stroke-linejoin="round"/></svg>
<div class="t" style="left:1302.50px;top:159px;font-size:12px;font-weight:400;color:#4a6fdc;letter-spacing:0.100px;">Properties</div>
<svg class="r" style="left:1319px;top:195px;" width="22" height="20" viewBox="0 0 22 20" fill="none"><rect x="1.5" y="1.5" width="19" height="17" rx="2" stroke="#555" stroke-width="1.6" stroke-linejoin="round"/><path d="M1.5 7h19M8 7v11.5" stroke="#555" stroke-width="1.6" stroke-linejoin="round"/></svg>
<div class="t" style="left:1303.00px;top:222px;font-size:12px;font-weight:400;color:#222;letter-spacing:-0.038px;">Templates</div>
<svg class="r" style="left:1317px;top:257px;" width="24" height="24" viewBox="0 0 24 24" fill="none"><path d="M6 7V2h10l5 5v15H6v-5" stroke="#555" stroke-width="1.6" stroke-linejoin="round"/><path d="M16 2v5h5" stroke="#555" stroke-width="1.6" stroke-linejoin="round"/><path d="M1.5 12h12M10 8.5l3.5 3.5-3.5 3.5" stroke="#555" stroke-width="1.6" stroke-linejoin="round" stroke-linecap="round"/></svg>
<div class="t" style="left:1306.40px;top:286px;font-size:12px;font-weight:400;color:#222;letter-spacing:0.119px;">From file</div>
<svg class="r" style="left:1317px;top:319px;" width="24" height="24" viewBox="0 0 24 24" fill="none"><path d="M6 6.5A9 9 0 1 1 4 14" stroke="#555" stroke-width="1.6" stroke-linejoin="round" stroke-linecap="round"/><path d="M3 2.5v5.5h5.5" stroke="#555" stroke-width="1.6" stroke-linejoin="round" stroke-linecap="round"/></svg>
<div class="t" style="left:1314.80px;top:349px;font-size:12px;font-weight:400;color:#222;letter-spacing:-0.288px;">Reset</div>
<div class="r" style="left:1302px;top:412px;width:56px;height:101px;background:#f9f9f9;border:1px solid #e4e4e4;box-sizing:border-box;border-radius:4px"></div>
<div class="r" style="left:1303px;top:413px;width:54px;height:49px;background:#fff;border-bottom:1px solid #e4e4e4;box-sizing:border-box;border-radius:4px 4px 0 0"></div>
<svg class="r" style="left:1322px;top:426px;" width="16" height="22" viewBox="0 0 16 22" fill="none"><rect x="1.8" y="1.6" width="12.4" height="18.6" rx="2.2" stroke="#666" stroke-width="1.7"/><path d="M1.8 16.5h12.4v2c0 1-.8 1.7-1.8 1.7H3.6c-1 0-1.8-.7-1.8-1.7z" fill="#666"/><rect x="6.8" y="17.6" width="2.4" height="1.4" fill="#fff"/></svg>
<svg class="r" style="left:1319px;top:478px;" width="22" height="20" viewBox="0 0 22 20" fill="none"><rect x="1.9" y="1.8" width="18.2" height="11.8" rx="1.6" stroke="#4a6fdc" stroke-width="1.9"/><path d="M9.2 14.5h3.6l.6 2.8H8.6z" fill="#4a6fdc"/><path d="M5.2 18.2h11.6" stroke="#4a6fdc" stroke-width="1.8"/></svg>
<div class="t" style="left:1308.50px;top:523px;font-size:12px;font-weight:400;color:#222;letter-spacing:-0.017px;">Preview</div>
<svg class="r" style="left:1319px;top:588px;" width="22" height="25" viewBox="0 0 22 25" fill="none"><rect x="2.9" y="3.2" width="11.9" height="5.9" rx="2.95" stroke="#666" stroke-width="1.5"/><rect x="6.6" y="3.4" width="4.5" height="5.5" rx="1.6" stroke="#666" stroke-width="1.3"/><path d="M14.8 5.6h2.4c1 0 1.6.6 1.6 1.6v5.2c0 1-.6 1.4-1.6 1.4h-6.6c-1 0-1.5.5-1.5 1.4v1.2" stroke="#666" stroke-width="1.5"/><rect x="7.3" y="16.6" width="4.1" height="6.6" rx="2" stroke="#666" stroke-width="1.5"/></svg>
<div class="t" style="left:1309.20px;top:618px;font-size:12px;font-weight:400;color:#222;letter-spacing:-0.310px;">Themes</div>
<svg class="r" style="left:1280px;top:682px;z-index:5" width="66" height="66" viewBox="0 0 66 66" fill="none"><circle cx="33" cy="33" r="33" fill="#8599cc" fill-opacity="0.93"/>
<path d="M31 45.5 L31.5 50 L41 45.5z" fill="#dcdde3"/>
<rect x="13.8" y="29.5" width="4" height="10" rx="2" fill="#3aa0f5"/><rect x="48.5" y="29.5" width="4" height="10" rx="2" fill="#3aa0f5"/>
<rect x="16.9" y="23.2" width="32.3" height="23" rx="10" fill="#e9e9ec"/>
<path d="M33 23.2h6.2a10 10 0 0 1 10 10v3a10 10 0 0 1-10 10H33z" fill="#d5d6da"/>
<rect x="20.5" y="26.9" width="25.6" height="15.1" rx="6.5" fill="#0d1d4e"/>
<path d="M27 42L35 27h2.5L29.5 42z" fill="#1b2f6a"/>
<rect x="24.7" y="30.5" width="4.2" height="7.3" rx="2.1" fill="#3cb4ff"/><rect x="37.2" y="30.5" width="4.2" height="7.3" rx="2.1" fill="#3cb4ff"/>
<path d="M33.1 18.5v4.7" stroke="#1b2a4a" stroke-width="1.5"/><circle cx="33.1" cy="17.4" r="2" fill="#3aa0f5"/>
<path d="M33 23.2c.5-1 1.5-1.2 3-1.2s2.5.2 3 1.2z" fill="#3aa0f5"/>
<ellipse cx="46.8" cy="17.6" rx="7" ry="5.2" fill="#dedfe3"/><path d="M45 22l-1 2.5 4-2.5z" fill="#dedfe3"/>
<circle cx="43.6" cy="17.6" r="1" fill="#2a3550"/><circle cx="46.8" cy="17.6" r="1" fill="#2a3550"/><circle cx="50" cy="17.6" r="1" fill="#2a3550"/>
</svg>
<div class="r" style="left:531px;top:711px;width:100px;height:40px;background:#fafafa;border:1px solid #cdcdcd;box-sizing:border-box;border-radius:4px"></div>
<div class="t" style="left:552.00px;top:724px;font-size:14.5px;font-weight:400;color:#333;letter-spacing:0.229px;">Previous</div>
<div class="r" style="left:636px;top:712px;width:98px;height:38px;background:#2e50b4;border-radius:4px"></div>
<div class="t" style="left:669.00px;top:724px;font-size:14.5px;font-weight:400;color:#fff;letter-spacing:0.733px;-webkit-text-stroke:0.2px #fff;">Next</div>
<div class="r" style="left:740px;top:712px;width:98px;height:38px;background:#2e50b4;border-radius:4px"></div>
<div class="t" style="left:761.80px;top:724px;font-size:14.5px;font-weight:400;color:#fff;letter-spacing:0.425px;-webkit-text-stroke:0.2px #fff;">Preview</div>
</body></html>
